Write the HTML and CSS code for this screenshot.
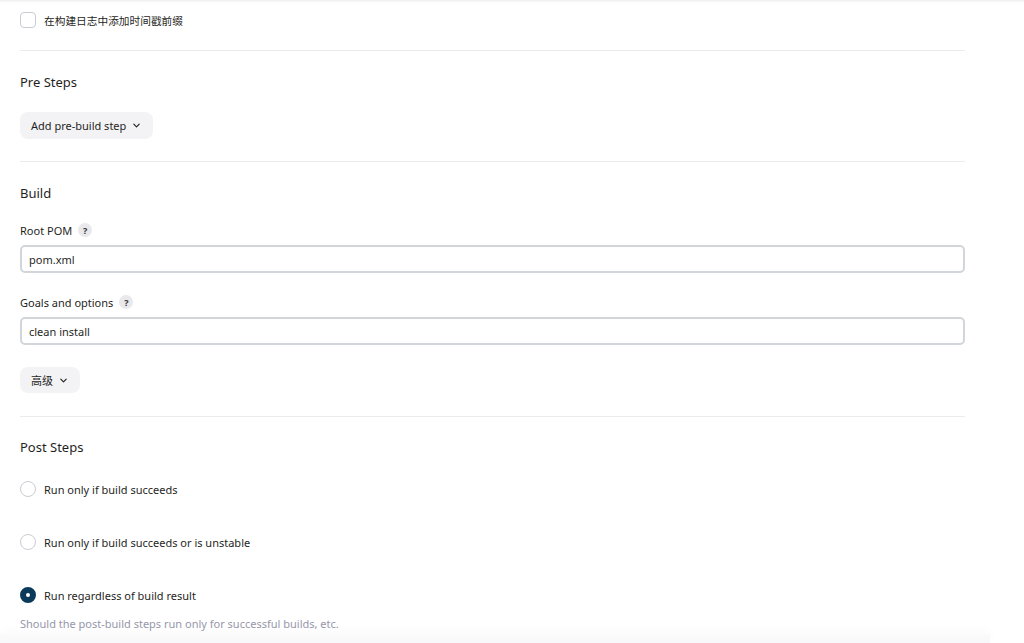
FILE: index.html
```html
<!DOCTYPE html>
<html lang="zh">
<head>
<meta charset="utf-8">
<link rel="stylesheet" href="styles.css">
</head>
<body>
<div class="topline"></div>
<main class="page">
  <label class="check-row">
    <span class="checkbox"></span>
    <span class="cjk">在构建日志中添加时间戳前缀</span>
  </label>
  <hr class="sep sep-first">

  <h2 class="section-title">Pre Steps</h2>
  <button class="dd-btn">Add pre-build step
    <svg class="chev" viewBox="0 0 10 10" width="9" height="9"><path d="M2 3.5 L5 6.5 L8 3.5" fill="none" stroke="#222" stroke-width="1.3" stroke-linecap="round" stroke-linejoin="round"/></svg>
  </button>
  <hr class="sep">

  <h2 class="section-title">Build</h2>
  <div class="field">
    <div class="field-label">Root POM <span class="help">?</span></div>
    <div class="input">pom.xml</div>
  </div>
  <div class="field">
    <div class="field-label">Goals and options <span class="help">?</span></div>
    <div class="input">clean install</div>
  </div>
  <button class="dd-btn dd-small"><span class="cjk">高级</span>
    <svg class="chev" viewBox="0 0 10 10" width="9" height="9"><path d="M2 3.5 L5 6.5 L8 3.5" fill="none" stroke="#222" stroke-width="1.3" stroke-linecap="round" stroke-linejoin="round"/></svg>
  </button>
  <hr class="sep">

  <h2 class="section-title post-title">Post Steps</h2>
  <div class="radios">
    <label class="radio-row"><span class="radio"></span>Run only if build succeeds</label>
    <label class="radio-row"><span class="radio"></span>Run only if build succeeds or is unstable</label>
    <label class="radio-row"><span class="radio radio-on"></span>Run regardless of build result</label>
  </div>
  <p class="desc">Should the post-build steps run only for successful builds, etc.</p>
</main>
<div class="bottombar"></div>
</body>
</html>
```

FILE: styles.css
```css
html, body {
  margin: 0;
  padding: 0;
  background: #ffffff;
  height: 643px;
  overflow: hidden;
}
body {
  font-family: "Noto Sans", "Noto Sans CJK SC", sans-serif;
  font-size: 11px;
  color: #1f1f24;
  position: relative;
}
.topline {
  height: 3px;
  background: linear-gradient(#efeff1, #ffffff);
}
.page {
  width: 945px;
  margin-left: 20px;
  display: flex;
  flex-direction: column;
  align-items: flex-start;
}
.cjk {
  font-family: "Noto Sans CJK SC", sans-serif;
}
.check-row .cjk { font-size: 10.7px; }
.check-row {
  display: flex;
  align-items: center;
  gap: 8px;
  margin-top: 9px;
  height: 16px;
}
.checkbox {
  width: 14px;
  height: 14px;
  border: 1px solid #c9ccd2;
  border-radius: 4px;
  background: #fff;
}
.sep {
  align-self: stretch;
  border: none;
  height: 1px;
  background: #ececef;
  margin: 0;
}
.sep-first { margin-top: 22px; }
.section-title {
  font-size: 13px;
  font-weight: 400;
  margin: 22px 0 0;
  line-height: 18px;
}
.post-title { margin-top: 21px; }
.dd-btn {
  font-family: inherit;
  font-size: 11px;
  color: #1f1f24;
  border: none;
  background: #f3f3f6;
  border-radius: 8px;
  height: 27px;
  padding: 0 12px 0 11px;
  display: flex;
  align-items: center;
  gap: 6px;
  margin-top: 21px;
  margin-bottom: 22px;
}
.field { align-self: stretch; margin-top: 20px; }
.field + .field { margin-top: 21px; }
.field-label {
  display: flex;
  align-items: center;
  gap: 6px;
  height: 16px;
}
.help {
  width: 14px;
  height: 14px;
  border-radius: 50%;
  background: #e9e9ec;
  font-size: 9px;
  font-weight: 700;
  display: inline-flex;
  align-items: center;
  justify-content: center;
  color: #333;
}
.input {
  margin-top: 7px;
  height: 24px;
  border: 2px solid #d2d6db;
  border-radius: 5px;
  padding: 0 7px;
  display: flex;
  align-items: center;
}
.dd-small { margin-top: 22px; margin-bottom: 23px; height: 26px; }
.radios {
  display: flex;
  flex-direction: column;
  gap: 37px;
  margin-top: 25px;
}
.radio-row {
  display: flex;
  align-items: center;
  gap: 8px;
  height: 16px;
}
.radio {
  width: 14px;
  height: 14px;
  border: 1px solid #c9ccd2;
  border-radius: 50%;
  box-sizing: content-box;
}
.radio-on {
  width: 10px;
  height: 10px;
  border: 3px solid #0b3a5b;
  background: #0b3a5b;
  position: relative;
}
.radio-on::after {
  content: "";
  position: absolute;
  left: 3px; top: 3px;
  width: 4px; height: 4px;
  border-radius: 50%;
  background: #fff;
}
.desc {
  margin: 13px 0 0;
  color: #9797aa;
  font-size: 11px;
}
.bottombar {
  position: absolute;
  left: 0;
  width: 990px;
  top: 634px;
  height: 12px;
  background: linear-gradient(#fbfbfc, #f6f6f8);
  box-shadow: 0 -4px 8px rgba(0,0,0,0.02);
}
```
